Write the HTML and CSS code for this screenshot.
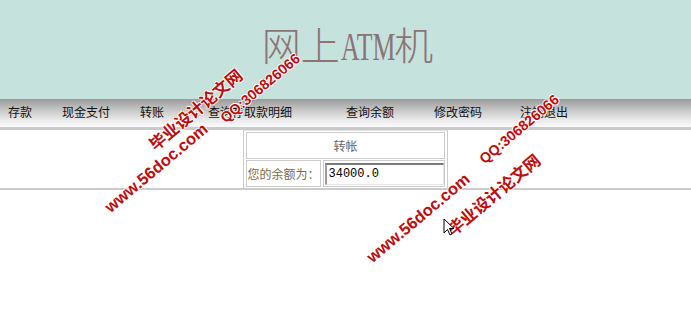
FILE: index.html
```html
<!DOCTYPE html>
<html lang="zh">
<head>
<meta charset="utf-8">
<title>网上ATM机</title>
<link rel="stylesheet" href="styles.css">
</head>
<body>
<div class="page">
  <header class="banner">
    <h1 class="title">网上<span class="latin">ATM</span>机</h1>
  </header>
  <nav class="menu">
    <a>存款</a>
    <a>现金支付</a>
    <a>转账</a>
    <a>查询存取款明细</a>
    <a>查询余额</a>
    <a>修改密码</a>
    <a>注销退出</a>
  </nav>
  <main class="content">
    <table class="box">
      <tr><td class="head" colspan="2">转帐</td></tr>
      <tr>
        <td class="label">您的余额为：</td>
        <td class="field"><input class="amount" type="text" value="34000.0"></td>
      </tr>
    </table>
  </main>

  <span class="wm wm-site w1">www.56doc.com</span>
  <span class="wm wm-cn w2">毕业设计论文网</span>
  <span class="wm wm-qq w3">QQ:306826066</span>
  <span class="wm wm-site w4">www.56doc.com</span>
  <span class="wm wm-cn w5">毕业设计论文网</span>
  <span class="wm wm-qq w6">QQ:306826066</span>
  <svg class="cursor" width="12" height="19" viewBox="0 0 12 19"><path d="M1 1 L1 15 L4.5 11.5 L7 17 L9 16 L6.5 10.5 L11 10.5 Z" fill="#fff" stroke="#000" stroke-width="1"/></svg>
</div>
</body>
</html>
```
FILE: styles.css
```css
html, body {
  margin: 0;
  padding: 0;
  background: #fff;
}
.page {
  position: relative;
  width: 691px;
  height: 330px;
  overflow: hidden;
  font-family: "Noto Sans CJK SC", "Liberation Sans", sans-serif;
  font-size: 12px;
}
.banner {
  height: 99px;
  background: #c6e2dd;
  display: flex;
  align-items: center;
  justify-content: center;
}
.title {
  margin: 0 0 6px 4px;
  font-family: "Liberation Serif", "Noto Sans CJK SC", serif;
  font-size: 39px;
  font-weight: 300;
  color: #8b7474;
  line-height: 42px;
  white-space: nowrap;
}
.latin {
  display: inline-block;
  transform: scaleX(0.66);
  transform-origin: left center;
  margin-right: -29px;
  margin-left: 1px;
}
.menu {
  height: 28px;
  background: linear-gradient(to bottom, #9a9a9a 0%, #c2c2c2 35%, #eaeaea 75%, #fbfafd 100%);
  display: grid;
  grid-template-columns: 54px 78px 68px 138px 88px 86px auto;
  align-items: center;
  padding-left: 8px;
  border-bottom: 3px solid #c9c9c9;
}
.menu a {
  color: #111;
  font-size: 12px;
  line-height: 14px;
  margin-bottom: 2px;
}
.content {
  height: 58px;
  border-bottom: 2px solid #cacaca;
}
.box {
  margin: 0 auto;
  border: 1px solid #cccccc;
  border-top-color: #e2e2e2;
  border-spacing: 2px 1px;
  width: 204px;
}
.box td {
  border: 1px solid #cccccc;
  height: 25px;
  padding: 0;
}
.head {
  text-align: center;
  color: #666;
}
.label {
  width: 72px;
  color: #806a44;
  white-space: nowrap;
}
.field {
  width: 121px;
}
.amount {
  display: block;
  box-sizing: border-box;
  width: 119px;
  height: 22px;
  margin: 0 0 0 1px;
  padding: 0 2px;
  border-style: solid;
  border-width: 2px 1px 1px 2px;
  border-color: #7a7a7a #e4e4e4 #e4e4e4 #9a9a9a;
  font-family: "Liberation Mono", monospace;
  font-size: 12px;
  color: #000;
  background: #fff;
}
.wm {
  position: absolute;
  transform-origin: left bottom;
  transform: rotate(-40deg);
  color: #c00c0c;
  font-family: "Liberation Sans", "Noto Sans CJK SC", sans-serif;
  font-weight: bold;
  white-space: nowrap;
  line-height: 1;
  text-shadow: 1px 0 0 #fff, -1px 0 0 #fff, 0 1px 0 #fff, 0 -1px 0 #fff;
}
.wm-site { font-size: 16.5px; }
.wm-cn { font-size: 16.5px; }
.wm-qq { font-size: 14.3px; }
.w1 { left: 112px; top: 199px; }
.w2 { left: 157px; top: 137px; }
.w3 { left: 227px; top: 111px; }
.w4 { left: 374px; top: 249px; }
.w5 { left: 455px; top: 222px; }
.w6 { left: 486px; top: 152px; }
.cursor {
  position: absolute;
  left: 443px;
  top: 218px;
}
```
